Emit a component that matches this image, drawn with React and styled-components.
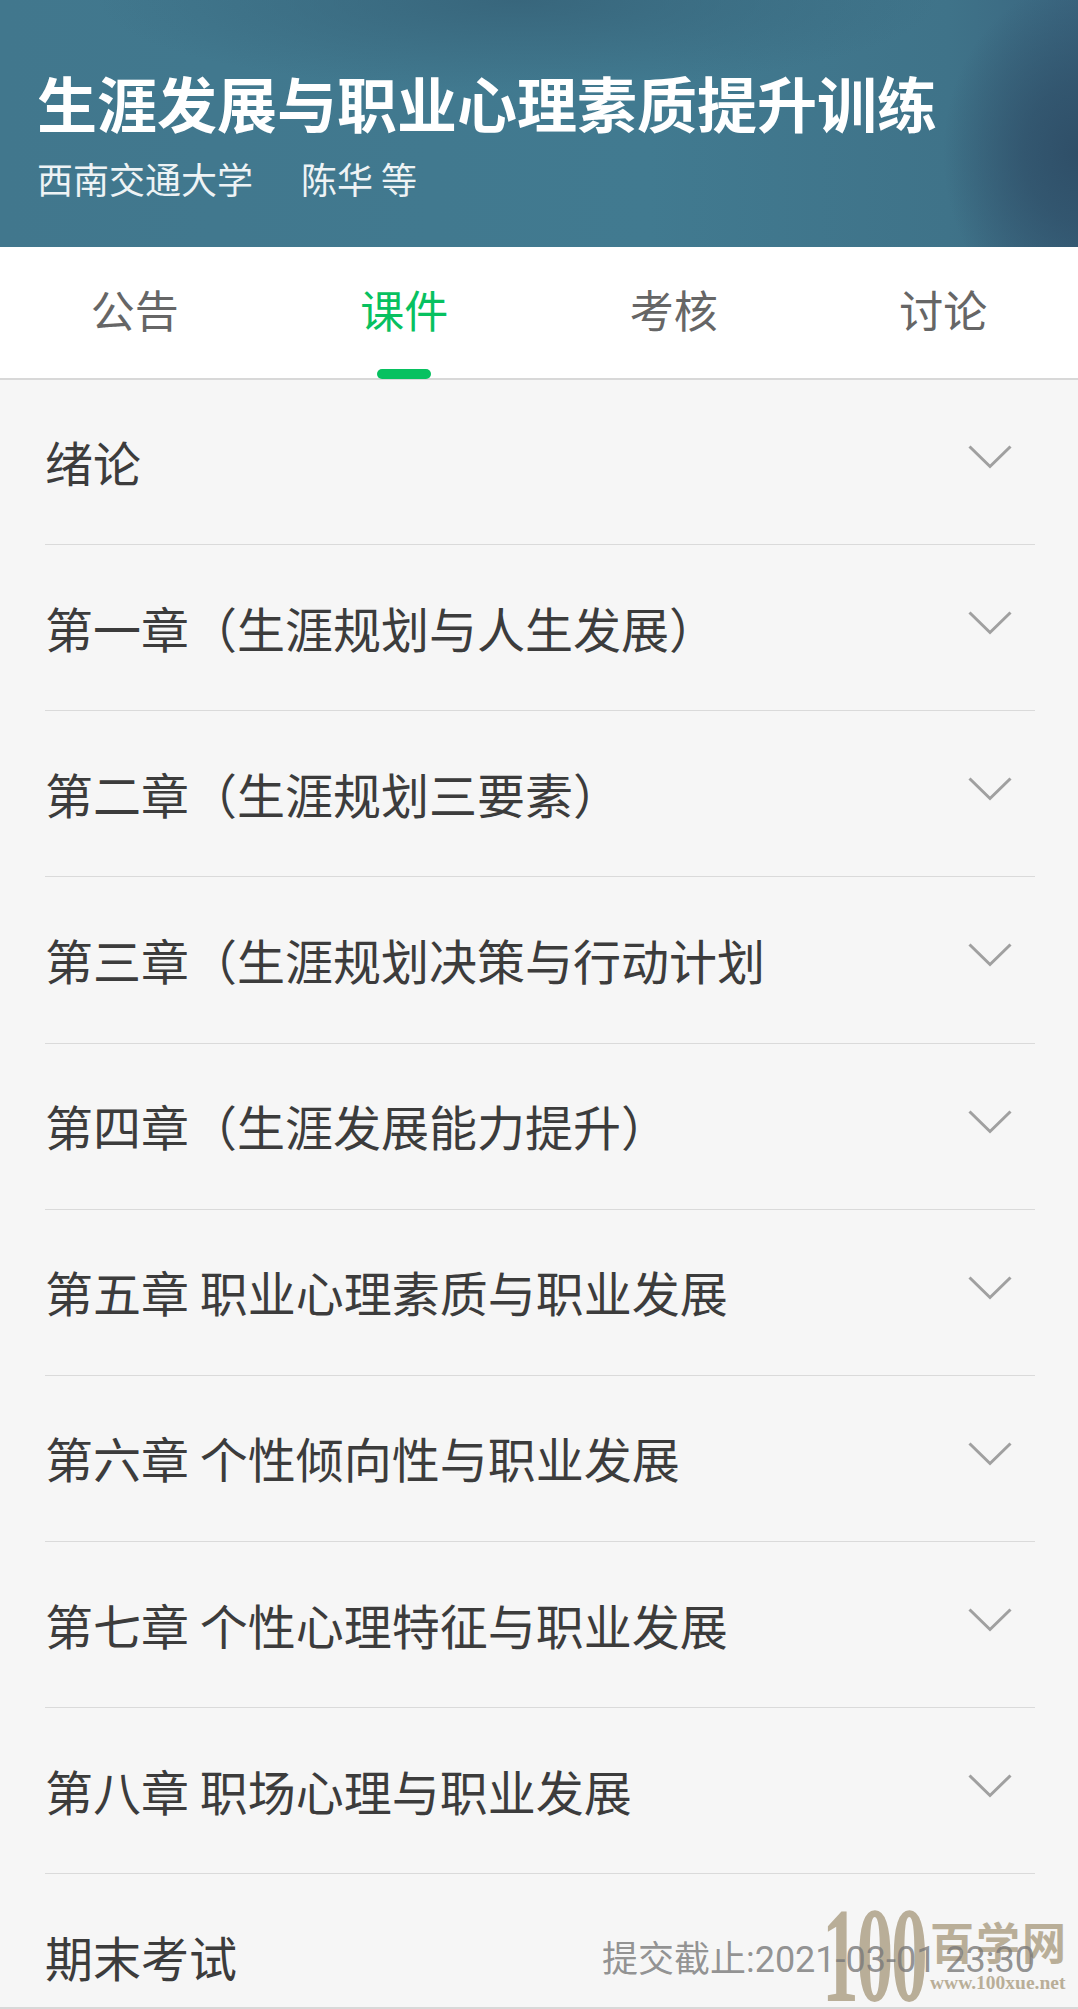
import styled, { createGlobalStyle } from "styled-components";

const TABS = ["公告", "课件", "考核", "讨论"];

const CHAPTERS = [
  "绪论",
  "第一章（生涯规划与人生发展）",
  "第二章（生涯规划三要素）",
  "第三章（生涯规划决策与行动计划",
  "第四章（生涯发展能力提升）",
  "第五章 职业心理素质与职业发展",
  "第六章 个性倾向性与职业发展",
  "第七章 个性心理特征与职业发展",
  "第八章 职场心理与职业发展",
];

export default function App() {
  return (
    <Page>
      <GlobalStyle />
      <Header>
        <Title>生涯发展与职业心理素质提升训练</Title>
        <Meta>
          <span>西南交通大学</span>
          <span>陈华 等</span>
        </Meta>
      </Header>
      <TabBar>
        {TABS.map((tab, i) => (
          <Tab key={tab} $active={i === 1}>
            {tab}
          </Tab>
        ))}
      </TabBar>
      <List>
        {CHAPTERS.map((name) => (
          <Row key={name}>
            <RowTitle>{name}</RowTitle>
            <Chevron viewBox="0 0 44 24" fill="none">
              <path d="M1.5 1.5 L22 21.5 L42.5 1.5" stroke="#a0a0a0" strokeWidth="3" />
            </Chevron>
          </Row>
        ))}
        <Row $last>
          <RowTitle>期末考试</RowTitle>
          <Deadline>提交截止:2021-03-01 23:30</Deadline>
        </Row>
      </List>
      <Watermark>
        <WatermarkNumber>100</WatermarkNumber>
        <WatermarkText>
          <WatermarkName>百学网</WatermarkName>
          <WatermarkUrl>www.100xue.net</WatermarkUrl>
        </WatermarkText>
      </Watermark>
      <BottomLine />
    </Page>
  );
}

const GlobalStyle = createGlobalStyle`
  html, body {
    margin: 0;
    padding: 0;
    background: #f6f6f6;
  }
  * {
    box-sizing: border-box;
  }
`;

const Page = styled.div`
  position: relative;
  width: 1078px;
  height: 2009px;
  overflow: hidden;
  background: #f6f6f6;
  font-family: "Noto Sans CJK SC", "Noto Sans", sans-serif;
`;

const Header = styled.header`
  height: 247px;
  padding: 66px 0 0 37px;
  color: #fff;
  background:
    radial-gradient(ellipse 135px 170px at 100% 62%, #2f4f68 0%, rgba(47, 79, 104, 0.7) 40%, rgba(47, 79, 104, 0) 100%),
    radial-gradient(ellipse 420px 90px at 48% 0%, rgba(55, 100, 122, 0.9) 0%, rgba(55, 100, 122, 0) 100%),
    linear-gradient(90deg, #41778d 0%, #417a90 60%, #3f7389 88%, #3a657f 100%);
`;

const Title = styled.h1`
  margin: 0;
  font-size: 60px;
  line-height: 72px;
  font-weight: 700;
  white-space: nowrap;
`;

const Meta = styled.div`
  display: flex;
  gap: 48px;
  margin-top: 17px;
  font-size: 36px;
  line-height: 46px;
  color: #eef3f5;
`;

const TabBar = styled.nav`
  display: grid;
  grid-template-columns: repeat(4, 1fr);
  height: 133px;
  background: #fff;
  border-bottom: 2px solid #d8d8d8;
`;

const Tab = styled.div`
  position: relative;
  display: flex;
  align-items: center;
  justify-content: center;
  padding-bottom: 8px;
  font-size: 44px;
  color: ${(p) => (p.$active ? "#07c160" : "#666")};

  &::after {
    content: "";
    display: ${(p) => (p.$active ? "block" : "none")};
    position: absolute;
    left: 50%;
    bottom: -1px;
    width: 54px;
    height: 10px;
    margin-left: -27px;
    border-radius: 5px;
    background: #07c160;
  }
`;

const List = styled.main`
  margin-top: -1px;
  padding: 0 43px 0 45px;
`;

const Row = styled.div`
  position: relative;
  display: flex;
  align-items: center;
  justify-content: space-between;
  height: 166.15px;
  padding: ${(p) => (p.$last ? "0" : "0 23px 0 0")};
  border-bottom: ${(p) => (p.$last ? "none" : "1.5px solid #dadada")};
`;

const RowTitle = styled.div`
  padding-bottom: 2px;
  font-size: 48px;
  line-height: 60px;
  color: #3c3c3c;
  white-space: nowrap;
`;

const Chevron = styled.svg`
  display: block;
  width: 44px;
  height: 24px;
  margin-top: -9px;
`;

const Deadline = styled.div`
  position: relative;
  z-index: 1;
  padding-bottom: 2px;
  font-family: Roboto, "Noto Sans CJK SC", sans-serif;
  font-size: 36px;
  color: rgba(120, 120, 120, 0.8);
  white-space: nowrap;
`;

const Watermark = styled.div`
  position: absolute;
  left: 822px;
  top: 1908px;
  display: flex;
  gap: 2px;
  color: #b9ae98;
`;

const WatermarkNumber = styled.div`
  flex: none;
  width: max-content;
  margin-right: -86px;
  font-family: "Liberation Serif", serif;
  font-weight: 700;
  font-size: 136px;
  line-height: 94px;
  letter-spacing: -4px;
  transform: scaleX(0.54);
  transform-origin: left center;
`;

const WatermarkText = styled.div`
  display: flex;
  flex-direction: column;
  padding-top: 3px;
`;

const WatermarkName = styled.div`
  font-family: "Noto Sans CJK SC", sans-serif;
  font-weight: 700;
  font-size: 44px;
  line-height: 60px;
  letter-spacing: 2px;
`;

const WatermarkUrl = styled.div`
  font-family: "Liberation Serif", serif;
  font-weight: 700;
  font-size: 19.5px;
  line-height: 24px;
  white-space: nowrap;
`;

const BottomLine = styled.div`
  position: absolute;
  left: 0;
  right: 0;
  bottom: 0;
  height: 2px;
  background: #d8d8d8;
`;
